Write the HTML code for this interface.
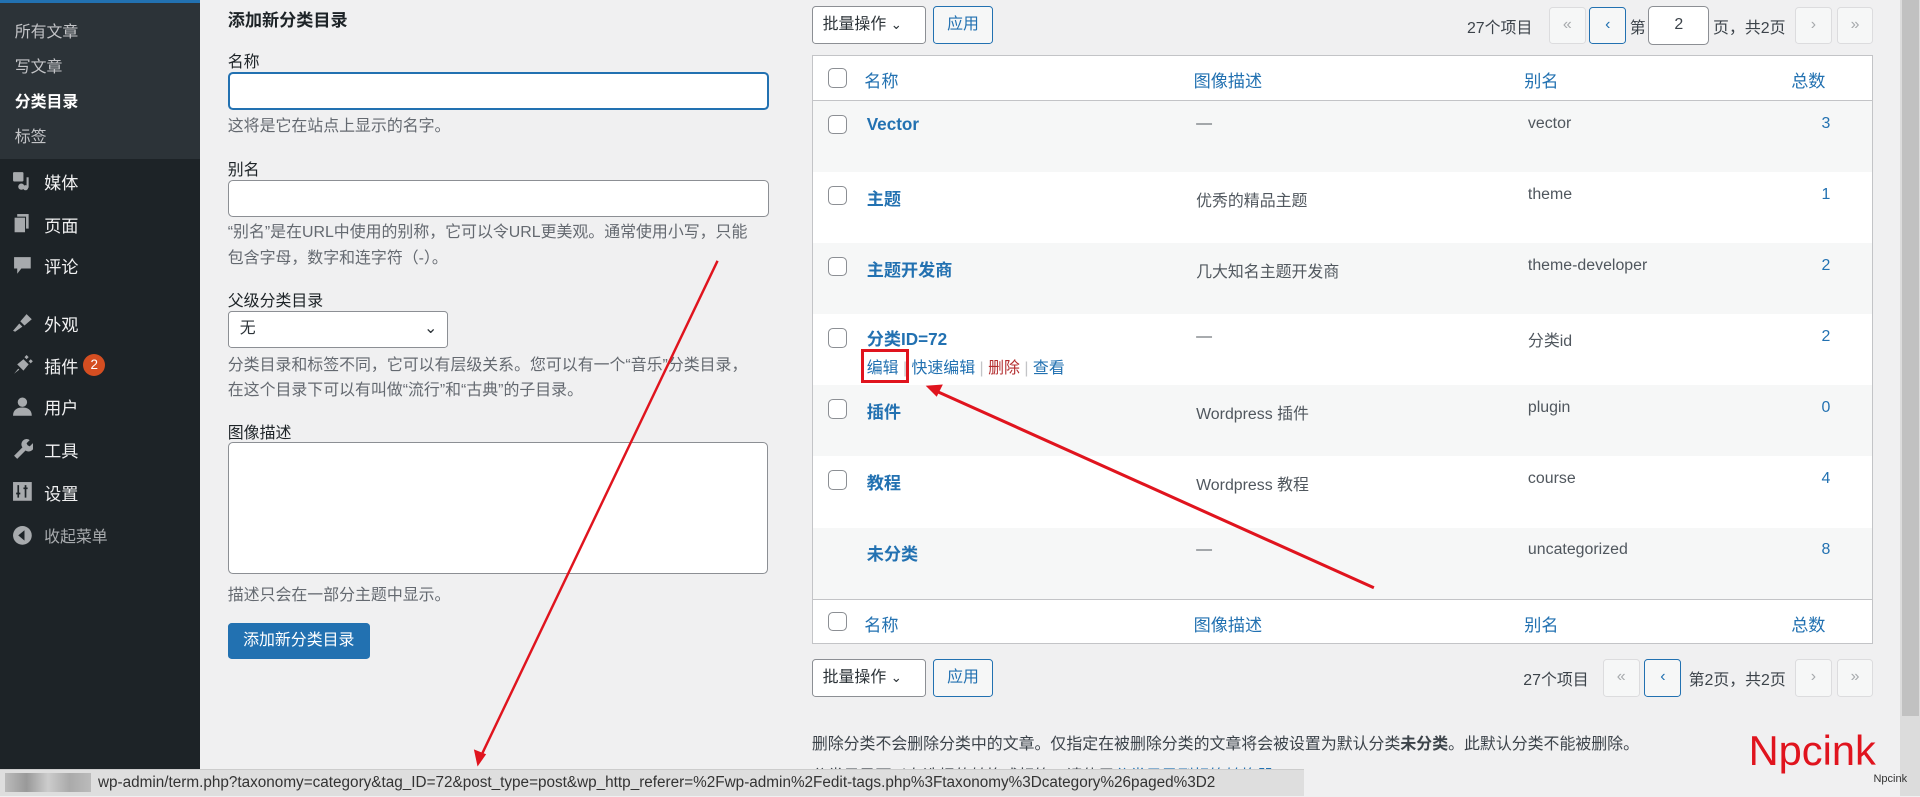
<!DOCTYPE html>
<html><head><meta charset="utf-8">
<style>
html{zoom:1.2244898}
*{box-sizing:border-box;margin:0;padding:0}
body{width:1568px;height:650px;overflow:hidden;background:#f0f0f1;font-family:"Liberation Sans","Noto Sans CJK SC",sans-serif;font-size:13px;color:#3c434a;position:relative}
.a{position:absolute;white-space:nowrap}
#side{position:absolute;left:0;top:0;width:163px;height:650px;background:#1d2327}
#sub{position:absolute;left:0;top:0;width:163px;height:130px;background:#2c3338;border-top:3px solid #2271b1}
.si{position:absolute;left:12px;color:#c3c4c7;font-size:13px}
.mi{position:absolute;left:36px;color:#f0f0f1;font-size:14px}
.ic{position:absolute;left:10px;width:17px;height:17px}
input.t{position:absolute;background:#fff;border:1px solid #8c8f94;border-radius:4px}
.lab{position:absolute;left:186px;color:#1d2327;font-size:13px}
.hint{position:absolute;left:186px;color:#646970;font-size:13px;line-height:21px}
.btn{position:absolute;border:1px solid #2271b1;color:#2271b1;background:#f6f7f7;border-radius:3px;font-size:13px;text-align:center}
.sel{position:absolute;border:1px solid #8c8f94;background:#fff;border-radius:3px;font-size:13px;color:#2c3338;padding-left:9px}
.pg{position:absolute;width:30px;height:30px;border:1px solid #dcdcde;background:#f6f7f7;border-radius:3px;color:#a7aaad;text-align:center;line-height:28px}
#tbl{position:absolute;left:663px;top:45px;width:867px;height:481px;background:#fff;border:1px solid #c3c4c7}
.row{position:absolute;left:0;width:865px;height:58px}
.cb{position:absolute;left:12px;width:16px;height:16px;border:1px solid #8c8f94;border-radius:4px;background:#fff}
.th{position:absolute;color:#2271b1;font-size:14px}
.nm{position:absolute;left:44px;color:#2271b1;font-weight:bold;font-size:14px}
.d{position:absolute;color:#50575e;font-size:13px}
.cnt{position:absolute;right:34px;color:#2271b1;font-size:13px}
</style></head><body>
<div id="side">
 <div id="sub">
  <div class="si" style="top:13px">所有文章</div>
  <div class="si" style="top:42px">写文章</div>
  <div class="si" style="top:70px;color:#fff;font-weight:bold">分类目录</div>
  <div class="si" style="top:99px">标签</div>
 </div>
 <svg class="ic" style="top:139px" viewBox="0 0 20 20"><rect x="1" y="2" width="10" height="9" rx="1" fill="#a7aaad"/><circle cx="9" cy="16" r="3" fill="#a7aaad"/><rect x="14" y="7" width="2" height="10" fill="#a7aaad"/><circle cx="13" cy="17" r="2.5" fill="#a7aaad"/></svg>
 <div class="mi" style="top:138px">媒体</div>
 <svg class="ic" style="top:174px" viewBox="0 0 20 20"><rect x="5" y="1" width="11" height="14" fill="#a7aaad"/><rect x="2" y="4" width="11" height="15" fill="#a7aaad" stroke="#1d2327"/></svg>
 <div class="mi" style="top:173px">页面</div>
 <svg class="ic" style="top:208px" viewBox="0 0 20 20"><path d="M2 2h16v11H9l-4 5v-5H2z" fill="#a7aaad"/></svg>
 <div class="mi" style="top:207px">评论</div>
 <svg class="ic" style="top:255px" viewBox="0 0 20 20"><path d="M1 18l6-7 3 3-7 5zM8 9l6-7 5 5-7 6z" fill="#a7aaad"/></svg>
 <div class="mi" style="top:254px">外观</div>
 <svg class="ic" style="top:289px" viewBox="0 0 20 20"><path d="M2 19l4-5 1 1zM5 10l6-5 5 5-5 6z M12 3l2-2 2 2-2 2z M16 7l2-2 2 2-2 2z" fill="#a7aaad"/></svg>
 <div class="mi" style="top:288px">插件</div>
 <div class="a" style="left:68px;top:289px;width:18px;height:18px;border-radius:9px;background:#d54e21;color:#fff;font-size:11px;text-align:center;line-height:18px">2</div>
 <svg class="ic" style="top:323px" viewBox="0 0 20 20"><circle cx="10" cy="6" r="4.5" fill="#a7aaad"/><path d="M1 19c0-6 4-8 9-8s9 2 9 8z" fill="#a7aaad"/></svg>
 <div class="mi" style="top:322px">用户</div>
 <svg class="ic" style="top:358px" viewBox="0 0 20 20"><path d="M2 17l8-8a5 5 0 0 1 7-7l-3 3 1 2 2 1 3-3a5 5 0 0 1-7 7l-8 8z" fill="#a7aaad"/></svg>
 <div class="mi" style="top:357px">工具</div>
 <svg class="ic" style="top:393px" viewBox="0 0 20 20"><rect x="1" y="1" width="18" height="18" fill="#a7aaad"/><path d="M6 4v12M13 4v12M4 12h4M11 7h4" stroke="#1d2327" stroke-width="1.6"/></svg>
 <div class="mi" style="top:392px">设置</div>
 <svg class="ic" style="top:429px" viewBox="0 0 20 20"><circle cx="10" cy="10" r="9" fill="#a7aaad"/><path d="M12 5v10l-6-5z" fill="#1d2327"/></svg>
 <div class="mi" style="top:428px;color:#a7aaad;font-size:13px">收起菜单</div>
</div>

<div class="a" style="left:186px;top:5px;font-size:14px;font-weight:bold;color:#1d2327">添加新分类目录</div>
<div class="lab" style="top:40px">名称</div>
<input class="t" style="left:186px;top:59px;width:442px;height:31px;border:2px solid #2271b1">
<div class="hint" style="top:93px">这将是它在站点上显示的名字。</div>
<div class="lab" style="top:128px">别名</div>
<input class="t" style="left:186px;top:147px;width:442px;height:30px">
<div class="hint" style="top:180px">“别名”是在URL中使用的别称，它可以令URL更美观。通常使用小写，只能<br>包含字母，数字和连字符（-）。</div>
<div class="lab" style="top:235px">父级分类目录</div>
<div class="sel" style="left:186px;top:254px;width:180px;height:30px;line-height:28px">无<span style="position:absolute;right:8px;top:0">&#8964;</span></div>
<div class="hint" style="top:288px">分类目录和标签不同，它可以有层级关系。您可以有一个“音乐”分类目录，<br>在这个目录下可以有叫做“流行”和“古典”的子目录。</div>
<div class="lab" style="top:343px">图像描述</div>
<div class="a" style="left:186px;top:361px;width:441px;height:108px;background:#fff;border:1px solid #8c8f94;border-radius:4px"></div>
<div class="hint" style="top:476px">描述只会在一部分主题中显示。</div>
<div class="a" style="left:186px;top:509px;width:116px;height:29px;background:#2271b1;border-radius:3px;color:#fff;text-align:center;line-height:29px">添加新分类目录</div>

<div class="sel" style="left:663px;top:5px;width:93px;height:31px;line-height:29px;padding-left:8px">批量操作 <span style="font-size:11px">&#8964;</span></div>
<div class="btn" style="left:762px;top:5px;width:49px;height:31px;line-height:29px">应用</div>
<div class="a" style="left:1198px;top:12px">27个项目</div>
<div class="pg" style="left:1265px;top:6px">«</div>
<div class="pg" style="left:1298px;top:6px;border-color:#2271b1;color:#2271b1">‹</div>
<div class="a" style="left:1331px;top:12px">第</div>
<div class="a" style="left:1346px;top:5px;width:50px;height:32px;background:#fff;border:1px solid #8c8f94;border-radius:4px;text-align:center;line-height:30px">2</div>
<div class="a" style="left:1399px;top:12px">页，共2页</div>
<div class="pg" style="left:1466px;top:6px">›</div>
<div class="pg" style="left:1500px;top:6px">»</div>

<div id="tbl">
 <div class="row" style="top:0;height:37px;border-bottom:1px solid #c3c4c7"><div class="cb" style="top:10px"></div><div class="th" style="left:42px;top:9px">名称</div><div class="th" style="left:311px;top:9px">图像描述</div><div class="th" style="left:581px;top:9px">别名</div><div class="th" style="left:799px;top:9px">总数</div></div>
 <div class="row" style="top:37px;background:#f6f7f7"><div class="cb" style="top:11px"></div><div class="nm" style="top:10px">Vector</div><div class="d" style="left:313px;top:11px">—</div><div class="d" style="left:584px;top:11px">vector</div><div class="cnt" style="top:11px">3</div></div>
 <div class="row" style="top:95px"><div class="cb" style="top:11px"></div><div class="nm" style="top:10px">主题</div><div class="d" style="left:313px;top:13px">优秀的精品主题</div><div class="d" style="left:584px;top:11px">theme</div><div class="cnt" style="top:11px">1</div></div>
 <div class="row" style="top:153px;background:#f6f7f7"><div class="cb" style="top:11px"></div><div class="nm" style="top:10px">主题开发商</div><div class="d" style="left:313px;top:13px">几大知名主题开发商</div><div class="d" style="left:584px;top:11px">theme-developer</div><div class="cnt" style="top:11px">2</div></div>
 <div class="row" style="top:211px"><div class="cb" style="top:11px"></div><div class="nm" style="top:9px">分类ID=72</div><div class="d" style="left:313px;top:11px">—</div><div class="d" style="left:584px;top:11px">分类id</div><div class="cnt" style="top:11px">2</div>
  <div class="a" style="left:44px;top:33px;font-size:13px;color:#2271b1">编辑 <span style="color:#c3c4c7">|</span> 快速编辑 <span style="color:#c3c4c7">|</span> <span style="color:#b32d2e">删除</span> <span style="color:#c3c4c7">|</span> 查看</div></div>
 <div class="row" style="top:269px;background:#f6f7f7"><div class="cb" style="top:11px"></div><div class="nm" style="top:10px">插件</div><div class="d" style="left:313px;top:13px">Wordpress 插件</div><div class="d" style="left:584px;top:11px">plugin</div><div class="cnt" style="top:11px">0</div></div>
 <div class="row" style="top:327px"><div class="cb" style="top:11px"></div><div class="nm" style="top:10px">教程</div><div class="d" style="left:313px;top:13px">Wordpress 教程</div><div class="d" style="left:584px;top:11px">course</div><div class="cnt" style="top:11px">4</div></div>
 <div class="row" style="top:385px;background:#f6f7f7"><div class="nm" style="top:10px">未分类</div><div class="d" style="left:313px;top:11px">—</div><div class="d" style="left:584px;top:11px">uncategorized</div><div class="cnt" style="top:11px">8</div></div>
 <div class="row" style="top:443px;height:37px;border-top:1px solid #c3c4c7"><div class="cb" style="top:10px"></div><div class="th" style="left:42px;top:9px">名称</div><div class="th" style="left:311px;top:9px">图像描述</div><div class="th" style="left:581px;top:9px">别名</div><div class="th" style="left:799px;top:9px">总数</div></div>
</div>

<div class="sel" style="left:663px;top:538px;width:93px;height:31px;line-height:29px;padding-left:8px">批量操作 <span style="font-size:11px">&#8964;</span></div>
<div class="btn" style="left:762px;top:538px;width:49px;height:31px;line-height:29px">应用</div>
<div class="a" style="left:1244px;top:545px">27个项目</div>
<div class="pg" style="left:1309px;top:538px;height:31px">«</div>
<div class="pg" style="left:1343px;top:538px;height:31px;border-color:#2271b1;color:#2271b1">‹</div>
<div class="a" style="left:1379px;top:545px">第2页，共2页</div>
<div class="pg" style="left:1466px;top:538px;height:31px">›</div>
<div class="pg" style="left:1500px;top:538px;height:31px">»</div>

<div class="a" style="left:663px;top:597px;color:#3c434a">删除分类不会删除分类中的文章。仅指定在被删除分类的文章将会被设置为默认分类<b>未分类</b>。此默认分类不能被删除。</div>
<div class="a" style="left:663px;top:623px;color:#3c434a">分类目录可以有选择的转换成标签，请使用<span style="color:#2271b1">分类目录到标签转换器</span>。</div>

<div class="a" style="left:1552px;top:0;width:16px;height:650px;background:#dcdcdc"></div>
<div class="a" style="left:1553px;top:0;width:14px;height:585px;background:#c1c1c1"></div>

<div class="a" style="left:1428px;top:594px;font-size:34px;color:#e0141e">Npcink</div>
<div class="a" style="left:1530px;top:631px;font-size:9px;color:#333">Npcink</div>

<div class="a" style="left:0;top:628px;width:1065px;height:22px;background:#dedede;border-top:1px solid #ccc;font-size:12.5px;color:#333;line-height:22px;padding-left:80px">wp-admin/term.php?taxonomy=category&amp;tag_ID=72&amp;post_type=post&amp;wp_http_referer=%2Fwp-admin%2Fedit-tags.php%3Ftaxonomy%3Dcategory%26paged%3D2</div>
<div class="a" style="left:4px;top:631px;width:70px;height:16px;background:linear-gradient(90deg,#bbb,#999,#ccc,#aaa,#bbb)"></div>

<div class="a" style="left:703px;top:285px;width:39px;height:28px;border:3px solid #e0141e"></div>
<svg class="a" style="left:0;top:0" width="1568" height="650">
 <line x1="586" y1="213" x2="394" y2="615" stroke="#e0141e" stroke-width="2"/>
 <path d="M390 626l-3-14 10 4z" fill="#e0141e"/>
 <line x1="1122" y1="480" x2="766" y2="320" stroke="#e0141e" stroke-width="2.5"/>
 <path d="M756 315l14-1-5 10z" fill="#e0141e"/>
</svg>
</body></html>
